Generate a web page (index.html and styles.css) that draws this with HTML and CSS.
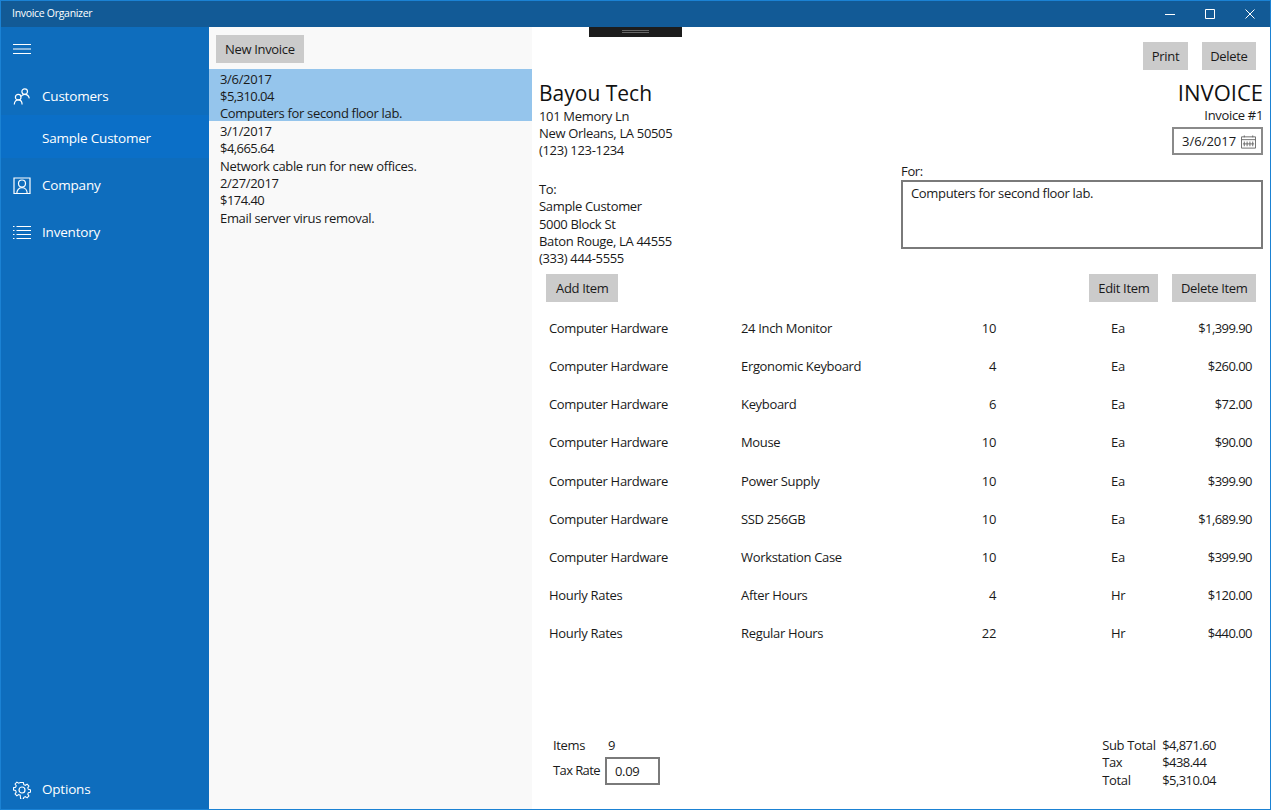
FILE: index.html
```
<!DOCTYPE html>
<html lang="en">
<head>
<meta charset="utf-8">
<title>Invoice Organizer</title>
<link rel="stylesheet" href="styles.css">
</head>
<body>
<div class="window">
  <header class="titlebar">
    <span class="app-title">Invoice Organizer</span>
    <div class="win-controls">
      <svg class="win-icon" viewBox="0 0 12 12"><path d="M1 6.500h10" /></svg>
      <svg class="win-icon" viewBox="0 0 12 12"><path d="M1.500 1.500h9v9h-9z" /></svg>
      <svg class="win-icon" viewBox="0 0 12 12"><path d="M1.500 1.500l9 9M10.500 1.500l-9 9" /></svg>
    </div>
  </header>
  <div class="content">
    <nav class="sidebar">
      <div class="hamburger">
        <svg class="ham-icon" viewBox="0 0 18 12"><path d="M0 1.500h18M0 6h18M0 10.500h18" /></svg>
      </div>
      <div class="nav-item nav-customers">
        <svg class="nav-icon" viewBox="0 0 18 18"><circle cx="11.700" cy="3.600" r="2.800"/><path d="M8 8.500c.8-1.400 2.200-2.200 3.700-2.200 2.300 0 4.100 1.600 4.600 4"/><circle cx="5.200" cy="9.200" r="2.800"/><path d="M1.300 16.500c0-2.700 1.700-4.600 3.900-4.600s3.900 1.900 3.900 4.600"/></svg>
        <span>Customers</span>
      </div>
      <div class="nav-item nav-selected"><span>Sample Customer</span></div>
      <div class="nav-item nav-company">
        <svg class="nav-icon" viewBox="0 0 18 18"><path d="M1 1h16v15.500H1z"/><circle cx="9" cy="6.500" r="3.500"/><path d="M3.800 16.500c0-3.300 2-5.800 5.200-5.800s5.200 2.500 5.200 5.800"/></svg>
        <span>Company</span>
      </div>
      <div class="nav-item nav-inventory">
        <svg class="nav-icon" viewBox="0 0 18 18"><path d="M0 2.500h1.500M3.500 2.500H18M0 6.500h1.500M3.500 6.500H18M0 10.500h1.500M3.500 10.500H18M0 14.500h1.500M3.500 14.500H18"/></svg>
        <span>Inventory</span>
      </div>
      <div class="nav-item nav-options">
        <svg class="nav-icon" viewBox="0 0 18 18"><circle cx="9" cy="9" r="3"/><path d="M7.500.7h3l.5 2.400 1.700.7 2-1.300 2 2.100-1.300 2 .7 1.700 2.300.5v2.600l-2.300.5-.7 1.700 1.300 2-2 2.100-2-1.300-1.700.7-.5 2.300h-3L7 14.800l-1.700-.7-2 1.300-2-2.100 1.300-2-.7-1.700L-.4 9.100V6.500l2.300-.5.7-1.700-1.300-2 2-2.100 2 1.300L7 .7z" transform="translate(.9 .9) scale(.9)"/></svg>
        <span>Options</span>
      </div>
    </nav>

    <section class="invoice-list">
      <div class="list-head"><button class="btn">New Invoice</button></div>
      <div class="list-item list-item-active">
        <div>3/6/2017</div><div class="money">$5,310.04</div><div>Computers for second floor lab.</div>
      </div>
      <div class="list-item">
        <div>3/1/2017</div><div class="money">$4,665.64</div><div>Network cable run for new offices.</div>
      </div>
      <div class="list-item">
        <div>2/27/2017</div><div class="money">$174.40</div><div>Email server virus removal.</div>
      </div>
    </section>

    <main class="invoice">
      <div class="grip"><span class="grip-line"></span></div>
      <div class="top-actions">
        <button class="btn btn-narrow">Print</button>
        <button class="btn btn-narrow">Delete</button>
      </div>
      <div class="details">
        <div class="parties">
          <h1 class="big">Bayou Tech</h1>
          <div>101 Memory Ln</div>
          <div>New Orleans, LA 50505</div>
          <div>(123) 123-1234</div>
          <div class="to-label">To:</div>
          <div>Sample Customer</div>
          <div>5000 Block St</div>
          <div>Baton Rouge, LA 44555</div>
          <div>(333) 444-5555</div>
        </div>
        <div class="meta">
          <h2 class="big big-title">INVOICE</h2>
          <div>Invoice #1</div>
          <div class="date-box">
            <span>3/6/2017</span>
            <svg class="cal-icon" viewBox="0 0 16 14"><path d="M.5 1.500h15v12H.5zM.5 4.500h15M3.500 0v2M12.500 0v2M3.500 6.500v5M6.500 6.500v5M9.500 6.500v5M12.500 6.500v5M2 9h12"/></svg>
          </div>
          <div class="for-wrap">
            <div class="for-label">For:</div>
            <div class="for-box">Computers for second floor lab.</div>
          </div>
        </div>
      </div>
      <div class="item-actions">
        <button class="btn btn-wide">Add Item</button>
        <div class="item-actions-right">
          <button class="btn">Edit Item</button>
          <button class="btn btn-narrow">Delete Item</button>
        </div>
      </div>
      <div class="items">
        <div class="row"><span>Computer Hardware</span><span>24 Inch Monitor</span><span class="num">10</span><span class="unit">Ea</span><span class="num money">$1,399.90</span></div>
        <div class="row"><span>Computer Hardware</span><span>Ergonomic Keyboard</span><span class="num">4</span><span class="unit">Ea</span><span class="num money">$260.00</span></div>
        <div class="row"><span>Computer Hardware</span><span>Keyboard</span><span class="num">6</span><span class="unit">Ea</span><span class="num money">$72.00</span></div>
        <div class="row"><span>Computer Hardware</span><span>Mouse</span><span class="num">10</span><span class="unit">Ea</span><span class="num money">$90.00</span></div>
        <div class="row"><span>Computer Hardware</span><span>Power Supply</span><span class="num">10</span><span class="unit">Ea</span><span class="num money">$399.90</span></div>
        <div class="row"><span>Computer Hardware</span><span>SSD 256GB</span><span class="num">10</span><span class="unit">Ea</span><span class="num money">$1,689.90</span></div>
        <div class="row"><span>Computer Hardware</span><span>Workstation Case</span><span class="num">10</span><span class="unit">Ea</span><span class="num money">$399.90</span></div>
        <div class="row"><span>Hourly Rates</span><span>After Hours</span><span class="num">4</span><span class="unit">Hr</span><span class="num money">$120.00</span></div>
        <div class="row"><span>Hourly Rates</span><span>Regular Hours</span><span class="num">22</span><span class="unit">Hr</span><span class="num money">$440.00</span></div>
      </div>
      <div class="footer">
        <div class="footer-left">
          <span>Items</span><span class="items-count">9</span>
          <span class="tax-label">Tax Rate</span><span class="tax-box">0.09</span>
        </div>
        <div class="totals">
          <span>Sub Total</span><span class="money">$4,871.60</span>
          <span>Tax</span><span class="money">$438.44</span>
          <span>Total</span><span class="money">$5,310.04</span>
        </div>
      </div>
    </main>
  </div>
</div>
</body>
</html>
```

FILE: styles.css
```
* { box-sizing: border-box; }
html, body { margin: 0; height: 100%; }
body {
  font-family: "Open Sans", "Noto Sans", sans-serif;
  font-size: 13px;
  line-height: 17.4px;
  letter-spacing: -.33px;
  color: #1a1a1a;
  background: #fff;
}
.window {
  width: 1271px;
  height: 810px;
  display: flex;
  flex-direction: column;
  border: 1px solid #1b82d4;
  overflow: hidden;
}
.titlebar {
  height: 26px;
  flex: none;
  background: #125a96;
  color: #fff;
  display: flex;
  align-items: center;
  justify-content: space-between;
  padding-left: 11px;
}
.app-title { font-size: 10.5px; letter-spacing: -.3px; }
.win-controls { display: flex; gap: 28px; padding-right: 14px; align-items: center; }
.win-icon { width: 12px; height: 12px; fill: none; stroke: #fff; stroke-width: 1; }
.content { flex: 1; display: flex; min-height: 0; }
.sidebar {
  width: 208px;
  flex: none;
  background: #0e6dbd;
  color: #fff;
  display: flex;
  flex-direction: column;
  font-size: 13.5px;
  letter-spacing: -.2px;
}
.hamburger { height: 42px; padding: 16px 0 0 12px; }
.ham-icon { display: block; width: 18px; height: 12px; fill: none; stroke: #fff; stroke-width: 1; }
.nav-item { display: flex; align-items: center; padding-left: 12px; gap: 11px; }
.nav-icon { width: 18px; height: 18px; flex: none; fill: none; stroke: #fff; stroke-width: 1.200; }
.nav-customers { height: 38px; margin-top: 8px; padding-top: 2px; }
.nav-selected { height: 43px; padding: 5px 0 0 41px; background: #0b6fc7; }
.nav-company { height: 47px; margin-top: 4px; }
.nav-inventory { height: 47px; }
.nav-options { height: 40px; margin-top: auto; padding-top: 1px; }
.invoice-list { width: 323px; flex: none; background: #f9f9f9; }
.list-head { height: 42px; padding: 8px 0 0 7px; }
.list-item { height: 52.200px; padding: 1.500px 0 0 11px; }
.list-item-active { background: #95c5ec; }
.money { letter-spacing: -.55px; }
.btn {
  font: inherit;
  letter-spacing: inherit;
  color: #1a1a1a;
  background: #cbcbcb;
  border: 0;
  height: 28px;
  padding: 2px 9px 0;
  margin: 0;
}
.btn-narrow { padding: 2px 8.500px 0; }
.btn-wide { padding: 2px 10px 0; }
.invoice { flex: 1; min-width: 0; position: relative; display: flex; flex-direction: column; background: #fff; }
.grip {
  position: absolute;
  left: 57px;
  top: 0;
  width: 93px;
  height: 10px;
  background: #1c1c1c;
  display: flex;
  justify-content: center;
  padding-top: 3px;
}
.grip-line { width: 27px; height: 3px; border-top: 1px solid #666; border-bottom: 1px solid #666; }
.top-actions { display: flex; justify-content: flex-end; gap: 14px; padding: 15px 14px 0 0; }
.details { display: flex; justify-content: space-between; padding: 0 7px; }
.big { font-weight: 400; font-size: 21px; letter-spacing: 0; line-height: 28px; margin: 8px 0 1px; color: #111; }
.big-title { font-size: 22px; }
.parties { flex: none; padding-top: .5px; }
.to-label { margin-top: 21px; }
.meta { width: 362px; text-align: right; }
.date-box {
  width: 91px;
  height: 28px;
  margin: 3px 0 0 auto;
  border: 2px solid #8a8a8a;
  display: flex;
  align-items: center;
  justify-content: space-between;
  padding: 1px 5px 0 8px;
  letter-spacing: 0;
}
.cal-icon { width: 15px; height: 14px; fill: none; stroke: #666; stroke-width: 1; }
.for-wrap { text-align: left; margin-top: 7px; }
.for-label { padding-top: 1px; margin-bottom: -1px; }
.for-box { height: 69px; border: 2px solid #7a7a7a; padding: 3px 8px; }
.item-actions { display: flex; justify-content: space-between; padding: 6px 14px 0 14px; }
.item-actions-right { display: flex; gap: 14px; }
.items { padding-top: 7.700px; }
.row {
  display: grid;
  grid-template-columns: 192px 200px 55px 1fr 100px;
  height: 38.200px;
  align-items: center;
  padding: 0 18px 0 17px;
}
.num { text-align: right; }
.unit { padding-left: 115px; }
.footer { margin-top: auto; display: flex; justify-content: space-between; padding: 0 54px 20px 21px; align-items: flex-start; }
.footer-left { display: grid; grid-template-columns: 52px auto; align-items: center; row-gap: 3px; }
.items-count { padding-left: 3px; }
.tax-label { letter-spacing: -.6px; }
.tax-box { width: 55px; height: 28px; border: 2px solid #7a7a7a; padding: 4px 8px 0; }
.totals { display: grid; grid-template-columns: 60px auto; }
```
